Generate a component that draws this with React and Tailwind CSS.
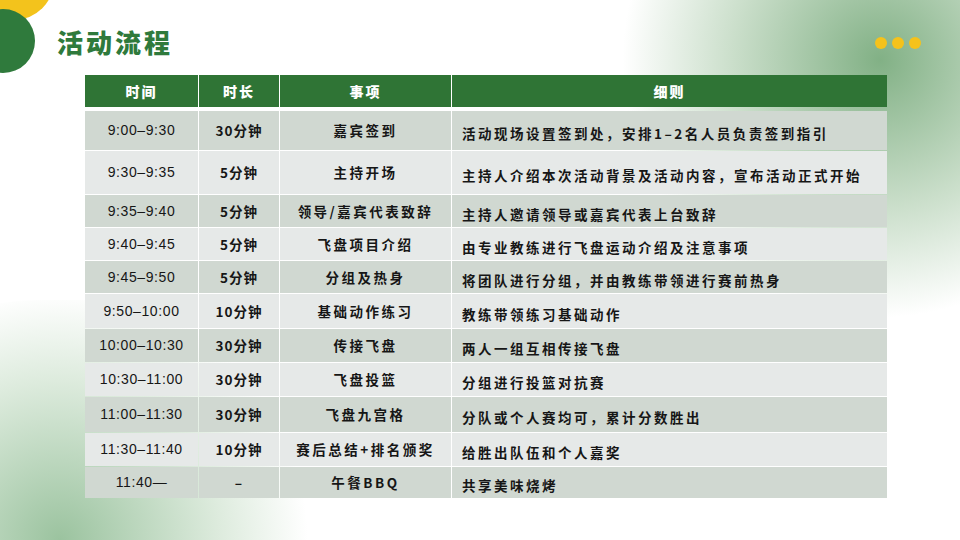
import React from "react";

const rows = [
  ["9:00–9:30", "30分钟", "嘉宾签到", "活动现场设置签到处，安排1–2名人员负责签到指引", "h-[39px]"],
  ["9:30–9:35", "5分钟", "主持开场", "主持人介绍本次活动背景及活动内容，宣布活动正式开始", "h-[43px]"],
  ["9:35–9:40", "5分钟", "领导/嘉宾代表致辞", "主持人邀请领导或嘉宾代表上台致辞", "h-[32px]"],
  ["9:40–9:45", "5分钟", "飞盘项目介绍", "由专业教练进行飞盘运动介绍及注意事项", "h-[32px]"],
  ["9:45–9:50", "5分钟", "分组及热身", "将团队进行分组，并由教练带领进行赛前热身", "h-[32px]"],
  ["9:50–10:00", "10分钟", "基础动作练习", "教练带领练习基础动作", "h-[34px]"],
  ["10:00–10:30", "30分钟", "传接飞盘", "两人一组互相传接飞盘", "h-[33px]"],
  ["10:30–11:00", "30分钟", "飞盘投篮", "分组进行投篮对抗赛", "h-[33px]"],
  ["11:00–11:30", "30分钟", "飞盘九宫格", "分队或个人赛均可，累计分数胜出", "h-[35px]"],
  ["11:30–11:40", "10分钟", "赛后总结+排名颁奖", "给胜出队伍和个人嘉奖", "h-[33px]"],
  ["11:40—", "–", "午餐BBQ", "共享美味烧烤", "h-[31px]"],
];

const cjk = "font-['Noto_Sans_CJK_SC',sans-serif]";

export default function App() {
  return (
    <div className="relative w-[960px] h-[540px] overflow-hidden bg-white">
      {/* background washes */}
      <div className="absolute right-[-180px] top-[-200px] w-[520px] h-[520px] rounded-full bg-[radial-gradient(circle,_rgba(116,168,120,0.9)_0%,_rgba(150,190,150,0.5)_40%,_rgba(255,255,255,0)_70%)]" />
      <div className="absolute left-[-200px] bottom-[-240px] w-[520px] h-[480px] rounded-full bg-[radial-gradient(circle,_rgba(130,180,135,0.8)_0%,_rgba(170,205,170,0.4)_45%,_rgba(255,255,255,0)_70%)]" />

      {/* corner circles */}
      <div className="absolute left-[-26px] top-[-60px] w-[80px] h-[80px] rounded-full bg-[#f3c31c]" />
      <div className="absolute left-[-29px] top-[9px] w-[64px] h-[64px] rounded-full bg-[#2f7a3c]" />

      {/* dots */}
      <div className="absolute left-[875px] top-[37px] flex gap-[5px]">
        <span className="w-[12px] h-[12px] rounded-full bg-[#f5c21b]" />
        <span className="w-[12px] h-[12px] rounded-full bg-[#f5c21b]" />
        <span className="w-[12px] h-[12px] rounded-full bg-[#f5c21b]" />
      </div>

      <div className="relative flex flex-col pl-[85px] pt-[25px]">
        <h1 className={`ml-[-28px] text-[26px] leading-[34px] font-black tracking-[3px] text-[#2f7a3c] ${cjk}`}>
          活动流程
        </h1>

        <div className="mt-[16px] w-[802px] flex flex-col gap-[1px] text-[13.5px] text-[#161616]">
          <div className={`grid grid-cols-[113px_80px_171px_1fr] gap-x-[1px] h-[32px] bg-white ${cjk} font-black text-[14px] tracking-[2px] text-white`}>
            <div className="bg-[#2f7435] flex items-center justify-center">时间</div>
            <div className="bg-[#2f7435] flex items-center justify-center">时长</div>
            <div className="bg-[#2f7435] flex items-center justify-center">事项</div>
            <div className="bg-[#2f7435] flex items-center justify-center">细则</div>
          </div>
          <div className="h-[2px]" />
          {rows.map((r, i) => {
            const bg = i % 2 === 0 ? "bg-[#d0d8d1]" : "bg-[#e6e9e8]";
            return (
              <div key={i} className={`grid grid-cols-[113px_80px_171px_1fr] gap-x-[1px] ${r[4]}`}>
                <div className={`${bg} flex items-center justify-center text-[14px] tracking-[0.6px] font-['Liberation_Sans',sans-serif]`}>{r[0]}</div>
                <div className={`${bg} flex items-center justify-center font-bold tracking-[1px] ${cjk}`}>{r[1]}</div>
                <div className={`${bg} flex items-center justify-center font-bold tracking-[2.5px] ${cjk}`}>{r[2]}</div>
                <div className={`${bg} flex items-center pl-[10px] pt-[6px] font-bold tracking-[2.5px] ${cjk}`}>{r[3]}</div>
              </div>
            );
          })}
        </div>
      </div>
    </div>
  );
}
